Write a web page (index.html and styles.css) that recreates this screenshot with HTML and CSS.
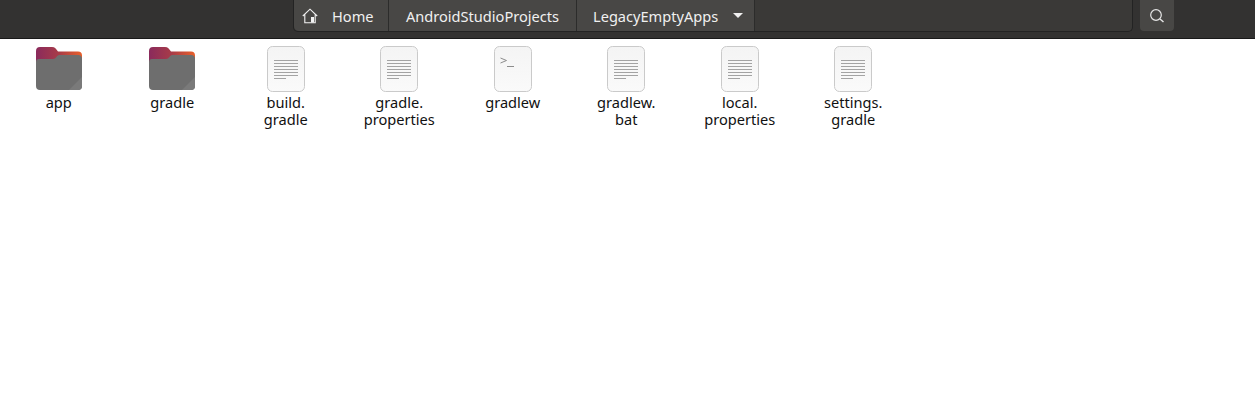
FILE: index.html
```html
<!DOCTYPE html>
<html lang="en">
<head>
    <meta charset="UTF-8">
    <title>LegacyEmptyApps</title>
    <link rel="stylesheet" href="styles.css">
</head>
<body>
    <svg class="defs" width="0" height="0">
        <defs>
            <linearGradient id="folderBack" x1="0" y1="0" x2="1" y2="0">
                <stop offset="0" stop-color="#8a2a5c"/>
                <stop offset="0.5" stop-color="#a83c48"/>
                <stop offset="1" stop-color="#e9602a"/>
            </linearGradient>
            <linearGradient id="paper" x1="0" y1="0" x2="0" y2="1">
                <stop offset="0" stop-color="#f4f4f4"/>
                <stop offset="1" stop-color="#fafafa"/>
            </linearGradient>
            <symbol id="folder" viewBox="0 0 46 43">
                <path d="M0 4a4 4 0 0 1 4-4h12c3 0 4 2 6 4.500h20a4 4 0 0 1 4 4v9H0z" fill="url(#folderBack)"/>
                <path d="M0 15a3 3 0 0 1 3-3h14c3 0 4-4 6-4h19a4 4 0 0 1 4 4v27a4 4 0 0 1-4 4H4a4 4 0 0 1-4-4z" fill="#6e6e6e"/>
                <path d="M46 30v9a4 4 0 0 1-4 4h-9z" fill="#7a7a7a"/>
            </symbol>
            <symbol id="textfile" viewBox="0 0 38 46">
                <rect x="0.5" y="0.5" width="37" height="45" rx="5" fill="url(#paper)" stroke="#cacaca"/>
                <path d="M7 14.500h24M7 17.500h24M7 20.500h24M7 23.500h24M7 26.500h24M7 29.500h24M7 32.500h12" stroke="#a3a3a3" fill="none"/>
            </symbol>
            <symbol id="script" viewBox="0 0 38 46">
                <rect x="0.5" y="0.5" width="37" height="45" rx="5" fill="url(#paper)" stroke="#cacaca"/>
                <path d="M6.500 12l6 2.500-6 2.500" stroke="#8c8c8c" fill="none"/>
                <path d="M13 20.500h7" stroke="#8c8c8c" fill="none"/>
            </symbol>
        </defs>
    </svg>

    <header class="toolbar">
        <nav class="pathbar">
            <div class="crumb crumb-home">
                <svg class="home-icon" width="16" height="16" viewBox="0 0 16 16">
                    <path d="M0.800 8L8 1.200 15.200 8M2.800 6.500v8.200h10.400V6.500" fill="none" stroke="#f2f2f2" stroke-width="1.100"/>
                    <path d="M9 9h3v5.500H9z" fill="#f2f2f2"/>
                </svg>
                <span>Home</span>
            </div>
            <div class="crumb crumb-mid"><span>AndroidStudioProjects</span></div>
            <div class="crumb crumb-last">
                <span>LegacyEmptyApps</span>
                <i class="caret"></i>
            </div>
        </nav>
        <button class="search-btn">
            <svg width="16" height="16" viewBox="0 0 16 16">
                <circle cx="7" cy="7" r="5.300" fill="none" stroke="#e6e6e6" stroke-width="1.200"/>
                <path d="M11 11l3.500 3" stroke="#e6e6e6" stroke-width="1.500" fill="none"/>
            </svg>
        </button>
    </header>

    <main class="files">
        <div class="file">
            <svg class="icon-folder"><use href="#folder"/></svg>
            <span class="name">app</span>
        </div>
        <div class="file">
            <svg class="icon-folder"><use href="#folder"/></svg>
            <span class="name">gradle</span>
        </div>
        <div class="file">
            <svg class="icon-doc"><use href="#textfile"/></svg>
            <span class="name">build.<br>gradle</span>
        </div>
        <div class="file">
            <svg class="icon-doc"><use href="#textfile"/></svg>
            <span class="name">gradle.<br>properties</span>
        </div>
        <div class="file">
            <svg class="icon-doc"><use href="#script"/></svg>
            <span class="name">gradlew</span>
        </div>
        <div class="file">
            <svg class="icon-doc"><use href="#textfile"/></svg>
            <span class="name">gradlew.<br>bat</span>
        </div>
        <div class="file">
            <svg class="icon-doc"><use href="#textfile"/></svg>
            <span class="name">local.<br>properties</span>
        </div>
        <div class="file">
            <svg class="icon-doc"><use href="#textfile"/></svg>
            <span class="name">settings.<br>gradle</span>
        </div>
    </main>
</body>
</html>
```

FILE: styles.css
```css
body {
    margin: 0;
    background-color: #fff;
    font-family: "Noto Sans", sans-serif;
    font-size: 14.6px;
    overflow: hidden;
}

.defs {
    display: block;
    height: 0;
}

.toolbar {
    display: flex;
    gap: 7px;
    height: 38px;
    padding-left: 293px;
    background-color: #333231;
    border-bottom: 1px solid #191919;
}

.pathbar {
    display: flex;
    width: 838px;
    height: 31px;
    background-color: #3a3937;
    border: 1px solid #232323;
    border-top: none;
    border-radius: 0 0 5px 5px;
}

.crumb {
    display: flex;
    align-items: center;
    height: 31px;
    color: #f0f0f0;
    background-color: #484745;
    border-right: 1px solid #2c2c2b;
    box-sizing: border-box;
    white-space: nowrap;
}

.crumb-home {
    width: 95px;
    padding-left: 8px;
    gap: 14px;
    border-bottom-left-radius: 5px;
}

.crumb-mid {
    width: 188px;
    justify-content: center;
}

.crumb-last {
    width: 178px;
    padding-left: 16px;
    gap: 15px;
}

.caret {
    width: 0;
    height: 0;
    border-left: 5px solid transparent;
    border-right: 5px solid transparent;
    border-top: 5px solid #f0f0f0;
}

.search-btn {
    display: flex;
    align-items: center;
    justify-content: center;
    width: 34px;
    height: 31px;
    padding: 0;
    background-color: #484745;
    border: none;
    border-radius: 0 0 4px 4px;
}

.files {
    display: grid;
    grid-template-columns: repeat(8, 113.5px);
    padding: 7px 0 0 2px;
}

.file {
    display: flex;
    flex-direction: column;
    align-items: center;
    color: #111;
    text-align: center;
    line-height: 17px;
}

.icon-folder {
    width: 46px;
    height: 43px;
    margin: 1px 0 4px;
}

.icon-doc {
    width: 38px;
    height: 46px;
    margin-bottom: 2px;
}

.name {
    display: block;
    padding-bottom: 8px;
}
```
